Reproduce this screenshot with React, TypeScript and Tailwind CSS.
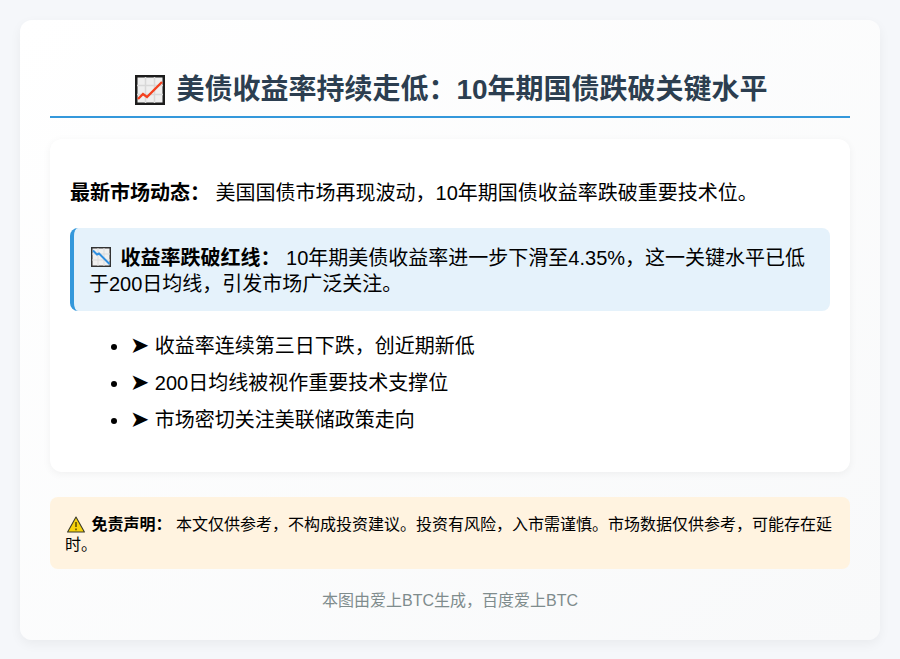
const font = { fontFamily: '"Liberation Sans", "Noto Sans CJK SC", sans-serif' };

function UpChart() {
  return (
    <svg viewBox="0 0 30 30" className="w-[30px] h-[30px] shrink-0">
      <rect x="1.25" y="1.25" width="27.5" height="27.5" fill="#efefef" stroke="#1c1c1c" strokeWidth="2.5" />
      <path d="M10.5 2v26M19.5 2v26M2 10.5h26M2 19.5h26" stroke="#d8d8d8" strokeWidth="1.5" />
      <path d="M3 24l5-5 4 3 15-15" fill="none" stroke="#f4411f" strokeWidth="2.4" />
    </svg>
  );
}

function DownChart() {
  return (
    <span className="inline-block h-[20px] align-[-2px] ml-[2px] mr-[4px]">
      <svg viewBox="0 0 20 20" className="w-[20px] h-[20px]">
        <rect x="0.75" y="0.75" width="18.5" height="18.5" fill="#f0f0f0" stroke="#333" strokeWidth="1.5" />
        <path d="M7 1v18M13 1v18M1 7h18M1 13h18" stroke="#dcdcdc" strokeWidth="1" />
        <path d="M2 3.5l4 4 2-1 10.5 10.5" fill="none" stroke="#2f8fe0" strokeWidth="2" />
      </svg>
    </span>
  );
}

function Warning() {
  return (
    <span className="inline-block h-[17px] align-[-3px] ml-[2px] mr-[2px]">
      <svg viewBox="0 0 18 17" className="w-[18px] h-[17px]">
        <path d="M9 1L17.4 16H.6z" fill="#f7d30c" stroke="#3a3a2a" strokeWidth="1.1" strokeLinejoin="round" />
        <path d="M9 6v5M9 12.4v1.8" stroke="#5a4a00" strokeWidth="1.5" />
      </svg>
    </span>
  );
}

const points = ["收益率连续第三日下跌，创近期新低", "200日均线被视作重要技术支撑位", "市场密切关注美联储政策走向"];

export default function App() {
  return (
    <div style={font} className="min-h-[659px] bg-[#f5f7fa] p-5 text-black">
      <div className="h-[620px] rounded-xl bg-gradient-to-br from-white to-[#f8f9fa] px-[30px] pt-[30px] shadow-[0_4px_12px_rgba(0,0,0,0.05)]">
        <h1 className="flex items-center justify-center gap-[11px] h-[68px] pt-[13px] pl-[3px] border-b-2 border-[#3498db] text-[28px] font-bold text-[#2c3e50]">
          <UpChart />
          <span>美债收益率持续走低：10年期国债跌破关键水平</span>
        </h1>

        <div className="mt-[21px] h-[333px] rounded-xl bg-white p-5 shadow-[0_2px_8px_rgba(0,0,0,0.05)]">
          <p className="mt-[21px] text-[20px] leading-[27px]">
            <strong>最新市场动态：</strong> 美国国债市场再现波动，10年期国债收益率跌破重要技术位。
          </p>

          <div className="mt-[21px] rounded-lg border-l-4 border-[#3498db] bg-[#e5f2fb] pl-[15px] pr-[15px] pt-[17px] pb-[14px] text-[20px] leading-[26px]">
            <DownChart />
            <strong> 收益率跌破红线：</strong> 10年期美债收益率进一步下滑至4.35%，这一关键水平已低于200日均线，引发市场广泛关注。
          </div>

          <ul className="mt-[22px] ml-[20px] list-disc pl-10 text-[20px] leading-[27px]">
            {points.map((p) => (
              <li key={p} className="mb-[10px]">
                <span className="text-[23px] leading-none" style={{ fontFamily: '"DejaVu Sans", sans-serif' }}>➤</span> {p}
              </li>
            ))}
          </ul>
        </div>

        <div className="mt-[25px] h-[72px] rounded-lg bg-[#fff3e0] px-[15px] pt-[18px] text-base leading-[20px]">
          <Warning />
          <strong> 免责声明：</strong> 本文仅供参考，不构成投资建议。投资有风险，入市需谨慎。市场数据仅供参考，可能存在延时。
        </div>

        <p className="mt-[21px] text-center text-base leading-[21px] text-[#7f8c8d]">本图由爱上BTC生成，百度爱上BTC</p>
      </div>
    </div>
  );
}
